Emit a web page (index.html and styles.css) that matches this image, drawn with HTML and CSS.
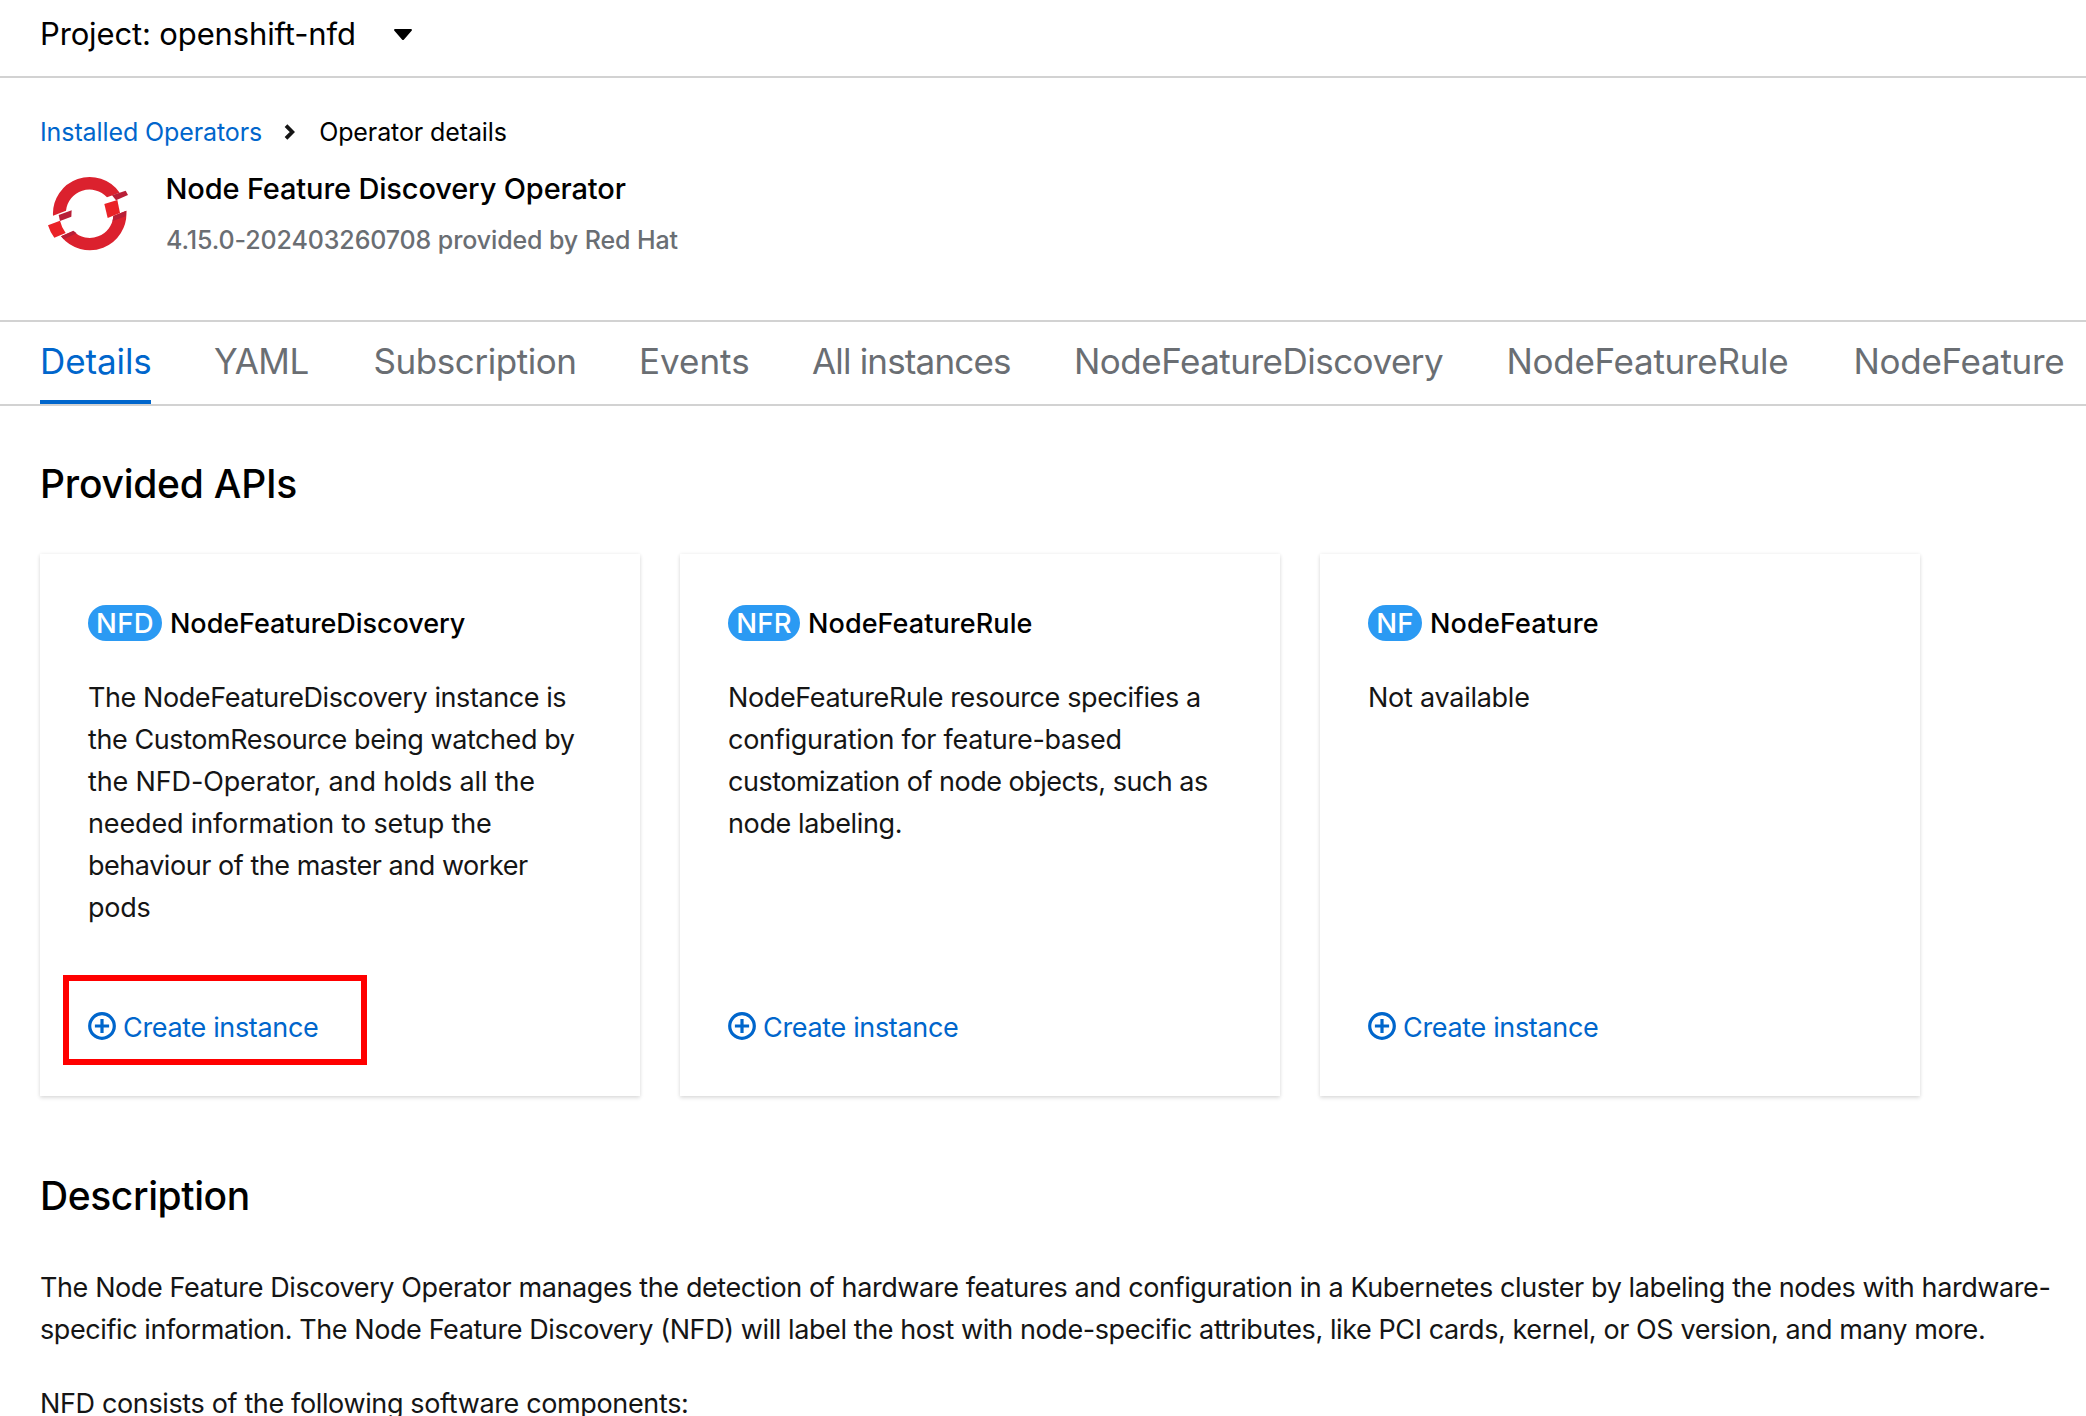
FILE: index.html
```html
<!DOCTYPE html>
<html lang="en">
<head>
<meta charset="utf-8">
<title>Node Feature Discovery Operator</title>
<link rel="stylesheet" href="styles.css">
</head>
<body>
<svg width="0" height="0" class="defs" aria-hidden="true">
  <symbol id="add-circle" viewBox="0 0 28 28">
    <circle cx="14" cy="14" r="12.300" fill="none" stroke="currentColor" stroke-width="3.200"/>
    <path d="M14 8.500v11M8.500 14h11" fill="none" stroke="currentColor" stroke-width="3.200" stroke-linecap="square" stroke-linejoin="round"/>
  </symbol>
</svg>

<header class="project-bar">
  <span class="project-name">Project: openshift-nfd</span>
  <svg class="caret" viewBox="0 0 18 11"><path d="M1.200 0h15.600c1 0 1.500 1.100.8 1.800L10 10.400a1.400 1.400 0 0 1-2 0L.4 1.800C-.3 1.100.2 0 1.200 0z"/></svg>
</header>

<section class="page-head">
  <nav class="breadcrumb">
    <a href="#">Installed Operators</a>
    <svg class="chevron" viewBox="0 0 11 16"><path d="M2 1.700L8.300 8L2 14.300" fill="none" stroke="#151515" stroke-width="3.800"/></svg>
    <span>Operator details</span>
  </nav>
  <div class="operator">
    <svg class="logo" viewBox="30 42 288 240">
      <path fill="#db212e" d="M69 167L108 152A71 71 0 0 1 231 112L269 98A110 110 0 0 0 69 167z"/>
      <path fill="#db212e" d="M289 152L250 168A71 71 0 0 1 130 214L93 229A110 110 0 0 0 289 152z"/>
      <path fill="#ea2227" d="M223 132L262 120L270 159L233 174z"/>
      <path fill="#ea2227" d="M54 196L90 182Q95 203 107 219L73 233Q60 216 54 196z"/>
      <path fill="#b81f37" d="M246 106L287 92L294 105L258 121z"/>
      <path fill="#b81f37" d="M289 152L250 168L248 183L287 169z"/>
      <path fill="#b81f37" d="M86 165L125 151L124 170L90 183z"/>
      <path fill="#b81f37" d="M93 229L130 212L140 220L101 238z"/>
    </svg>
    <div class="operator-text">
      <h1>Node Feature Discovery Operator</h1>
      <p>4.15.0-202403260708 provided by Red Hat</p>
    </div>
  </div>
</section>

<nav class="tabs">
  <a class="tab active" href="#">Details</a>
  <a class="tab yaml" href="#">YAML</a>
  <a class="tab subscription" href="#">Subscription</a>
  <a class="tab events" href="#">Events</a>
  <a class="tab instances" href="#">All instances</a>
  <a class="tab discovery" href="#">NodeFeatureDiscovery</a>
  <a class="tab rule" href="#">NodeFeatureRule</a>
  <a class="tab rule" href="#">NodeFeature</a>
</nav>

<main class="content">
  <h2>Provided APIs</h2>
  <div class="cards">
    <article class="card">
      <div class="card-head"><span class="badge nfd">NFD</span><h3>NodeFeatureDiscovery</h3></div>
      <p class="card-body">
        <span class="line t43">The NodeFeatureDiscovery instance is</span>
        <span class="line t43">the CustomResource being watched by</span>
        <span class="line t15">the NFD-Operator, and holds all the</span>
        <span class="line t15">needed information to setup the</span>
        <span class="line t46">behaviour of the master and worker</span>
        <span class="line t25">pods</span>
      </p>
      <a class="create" href="#"><svg><use href="#add-circle"/></svg><span>Create instance</span></a>
      <div class="highlight"></div>
    </article>
    <article class="card">
      <div class="card-head"><span class="badge nfr">NFR</span><h3 class="wide1">NodeFeatureRule</h3></div>
      <p class="card-body">
        <span class="line t38">NodeFeatureRule resource specifies a</span>
        <span class="line t25">configuration for feature-based</span>
        <span class="line t50">customization of node objects, such as</span>
        <span class="line t38">node labeling.</span>
      </p>
      <a class="create" href="#"><svg><use href="#add-circle"/></svg><span>Create instance</span></a>
    </article>
    <article class="card">
      <div class="card-head"><span class="badge nf">NF</span><h3 class="wide2">NodeFeature</h3></div>
      <p class="card-body"><span class="line t25">Not available</span></p>
      <a class="create" href="#"><svg><use href="#add-circle"/></svg><span>Create instance</span></a>
    </article>
  </div>

  <h2 class="desc-title">Description</h2>
  <p class="desc">
    <span class="line t40">The Node Feature Discovery Operator manages the detection of hardware features and configuration in a Kubernetes cluster by labeling the nodes with hardware-</span>
    <span class="line t41">specific information. The Node Feature Discovery (NFD) will label the host with node-specific attributes, like PCI cards, kernel, or OS version, and many more.</span>
  </p>
  <p class="desc"><span class="line t36">NFD consists of the following software components:</span></p>
</main>
</body>
</html>
```
FILE: styles.css
```css
* { box-sizing: border-box; }
html, body { height: 1416px; overflow: hidden; }
body {
  margin: 0;
  background: #fff;
  color: #151515;
  font-family: Inter, "Liberation Sans", sans-serif;
  font-size: 27px;
  line-height: 42px;
  white-space: nowrap;
}
h1, h2, h3, p { margin: 0; font-weight: 500; }
p { font-weight: 400; }
a { color: #06c; text-decoration: none; }
svg { display: block; flex: none; }
.defs { display: none; }

.project-bar {
  display: flex;
  align-items: center;
  height: 78px;
  padding: 10px 40px 18px;
  border-bottom: 2px solid #d2d2d2;
  color: #000;
}
.project-name { width: 354px; font-size: 31px; line-height: 48px; letter-spacing: -.14px; }
.caret { width: 18px; height: 11px; }

.page-head { height: 242px; padding: 34px 40px 0; }
.breadcrumb {
  display: flex;
  align-items: center;
  font-size: 25px;
  line-height: 40px;
  letter-spacing: -.1px;
  color: #000;
}
.chevron { width: 11px; height: 16px; margin: 0 24px 0 22px; }

.operator { display: flex; gap: 29.500px; margin-top: 14px; }
.logo { width: 96px; height: 80px; margin-top: 8px; }
.operator h1 { font-size: 29px; line-height: 45px; letter-spacing: -.14px; color: #000; }
.operator p {
  margin-top: 9px;
  padding-left: .5px;
  font-size: 25px;
  font-weight: 500;
  line-height: 40px;
  letter-spacing: -.111px;
  color: #6a6e73;
}

.tabs {
  display: grid;
  grid-template-columns: 174px 159.5px 265.5px 173px 262px 432.5px 347px auto;
  height: 86px;
  padding-left: 40px;
  border: solid #d2d2d2;
  border-width: 2px 0;
}
.tab {
  padding-top: 12px;
  font-size: 35px;
  line-height: 54px;
  color: #6a6e73;
}
.tab.active { width: 111px; letter-spacing: -.1px; border-bottom: 4px solid #06c; color: #06c; }
.yaml { letter-spacing: -.5px; }
.subscription { letter-spacing: -.43px; }
.events { letter-spacing: 0; }
.instances { letter-spacing: -.827px; }
.discovery { letter-spacing: -.507px; }
.rule { letter-spacing: -.28px; }

.content { padding: 48px 40px 0; }
h2 {
  font-size: 39px;
  line-height: 60px;
  letter-spacing: -.24px;
  color: #000;
}
.desc-title { margin-top: 70px; letter-spacing: -.4px; }

.cards { display: flex; gap: 40px; margin-top: 40px; }
.card {
  position: relative;
  display: flex;
  flex-direction: column;
  width: 600px;
  height: 542px;
  padding: 51px 48px 47px;
  box-shadow: 0 2px 4px rgba(3, 3, 3, .12), 0 0 4px rgba(3, 3, 3, .06);
}
.card-head { display: flex; align-items: center; gap: 8px; height: 36px; }
.card-head h3 { padding-top: 2px; font-size: 27px; letter-spacing: -.05px; color: #000; }
.card-head .wide1 { letter-spacing: .08px; }
.card-head .wide2 { letter-spacing: .17px; }
.badge {
  height: 36px;
  border-radius: 18px;
  background: #2b9af3;
  color: #fff;
  font-size: 27.500px;
  line-height: 36px;
  text-align: center;
  letter-spacing: .3px;
  font-weight: 550;
}
.nfd { width: 74px; }
.nfr { width: 72px; }
.nf { width: 54px; }
.card-body { margin-top: 36px; }
.line { display: block; }
.t15 { letter-spacing: -.143px; }
.t25 { letter-spacing: -.257px; }
.t36 { letter-spacing: -.361px; }
.t38 { letter-spacing: -.379px; }
.t40 { letter-spacing: -.4px; }
.t41 { letter-spacing: -.41px; }
.t43 { letter-spacing: -.42px; }
.t46 { letter-spacing: -.462px; }
.t50 { letter-spacing: -.501px; }

.create { display: flex; align-items: center; gap: 7px; margin-top: auto; letter-spacing: -.34px; }
.create svg { width: 28px; height: 28px; margin-top: -4px; }
.highlight {
  position: absolute;
  left: 23px;
  top: 421px;
  width: 304px;
  height: 90px;
  border: 6px solid #f00;
}

.desc { margin-top: 41px; }
.desc + .desc { margin-top: 32px; }
```
